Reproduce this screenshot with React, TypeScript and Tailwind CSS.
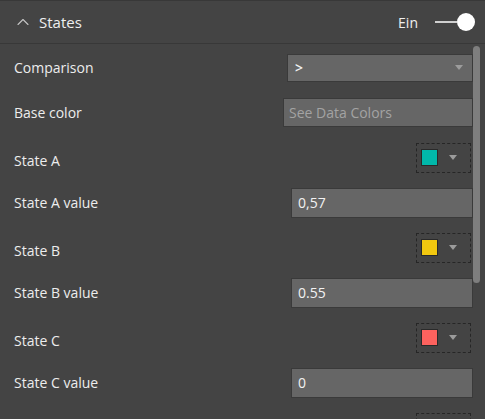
import { ChevronUp } from "lucide-react";

const font = { fontFamily: '"Open Sans", "Liberation Sans", sans-serif' };

function Caret({ className = "" }: { className?: string }) {
  return (
    <svg width="8" height="5" viewBox="0 0 8 5" className={className}>
      <path d="M0 0H8L4 5Z" fill="#9c9c9c" />
    </svg>
  );
}

function Label({ children, shift = false }: { children: React.ReactNode; shift?: boolean }) {
  return (
    <span className={`text-[14px] text-[#ededed] ${shift ? "pt-[5px]" : ""}`}>{children}</span>
  );
}

function ColorPicker({ color }: { color: string }) {
  return (
    <div className="mr-[14px] flex h-[30px] w-[55px] items-center border border-dashed border-[#262626] pl-[4px]">
      <div className="h-[17px] w-[17px] border border-[#2a2a2a]" style={{ backgroundColor: color }} />
      <Caret className="ml-[11px]" />
    </div>
  );
}

function TextBox({ value }: { value: string }) {
  return (
    <div className="mr-[12px] flex h-[30px] w-[182px] items-center border border-[#3a3a3a] bg-[#666] pl-[6px] text-[14px] text-[#f2f2f2]">
      {value}
    </div>
  );
}

export default function App() {
  return (
    <div
      className="relative h-[419px] w-[485px] overflow-hidden bg-[#444444]"
      style={font}
    >
      {/* Header */}
      <div className="flex h-[44px] items-center justify-between border-y border-[#383838] pl-[13px] pr-[10px]">
        <div className="flex items-center gap-[6px]">
          <ChevronUp size={20} strokeWidth={1.3} className="text-[#c4c4c4]" />
          <span className="text-[15px] text-[#efefef]">States</span>
        </div>
        <div className="flex items-center gap-[17px]">
          <span className="text-[14px] text-[#efefef]">Ein</span>
          <div className="flex items-center">
            <div className="h-[2px] w-[22px] bg-[#d0d0d0]" />
            <div className="h-[18px] w-[18px] rounded-full bg-white" />
          </div>
        </div>
      </div>

      {/* Rows */}
      <div className="flex flex-col pl-[14px] pt-[1px]">
        <div className="flex h-[45px] items-center justify-between">
          <Label>Comparison</Label>
          <div className="mr-[12px] flex h-[28px] w-[186px] items-center justify-between border border-[#3a3a3a] bg-[#666] pl-[7px] pr-[9px] text-[14px] text-[#f2f2f2]">
            <span className="font-semibold">&gt;</span>
            <Caret />
          </div>
        </div>
        <div className="flex h-[45px] items-center justify-between">
          <Label>Base color</Label>
          <div className="mr-[12px] flex h-[29px] w-[190px] items-center border border-[#3a3a3a] bg-[#666] pl-[5px] text-[14px] text-[#a3a3a3]">
            See Data Colors
          </div>
        </div>
        <div className="flex h-[45px] items-center justify-between">
          <Label shift>State A</Label>
          <ColorPicker color="#01B8AA" />
        </div>
        <div className="flex h-[45px] items-center justify-between">
          <Label>State A value</Label>
          <TextBox value="0,57" />
        </div>
        <div className="flex h-[45px] items-center justify-between">
          <Label shift>State B</Label>
          <ColorPicker color="#F2C80F" />
        </div>
        <div className="flex h-[45px] items-center justify-between">
          <Label>State B value</Label>
          <TextBox value="0.55" />
        </div>
        <div className="flex h-[45px] items-center justify-between">
          <Label shift>State C</Label>
          <ColorPicker color="#FD625E" />
        </div>
        <div className="flex h-[45px] items-center justify-between">
          <Label>State C value</Label>
          <TextBox value="0" />
        </div>
        <div className="flex h-[45px] items-center justify-end">
          <ColorPicker color="#333" />
        </div>
      </div>

      {/* Scrollbar thumb */}
      <div className="absolute left-[473px] top-[46px] h-[237px] w-[7px] rounded-full bg-[#7e7e7e]" />
    </div>
  );
}
